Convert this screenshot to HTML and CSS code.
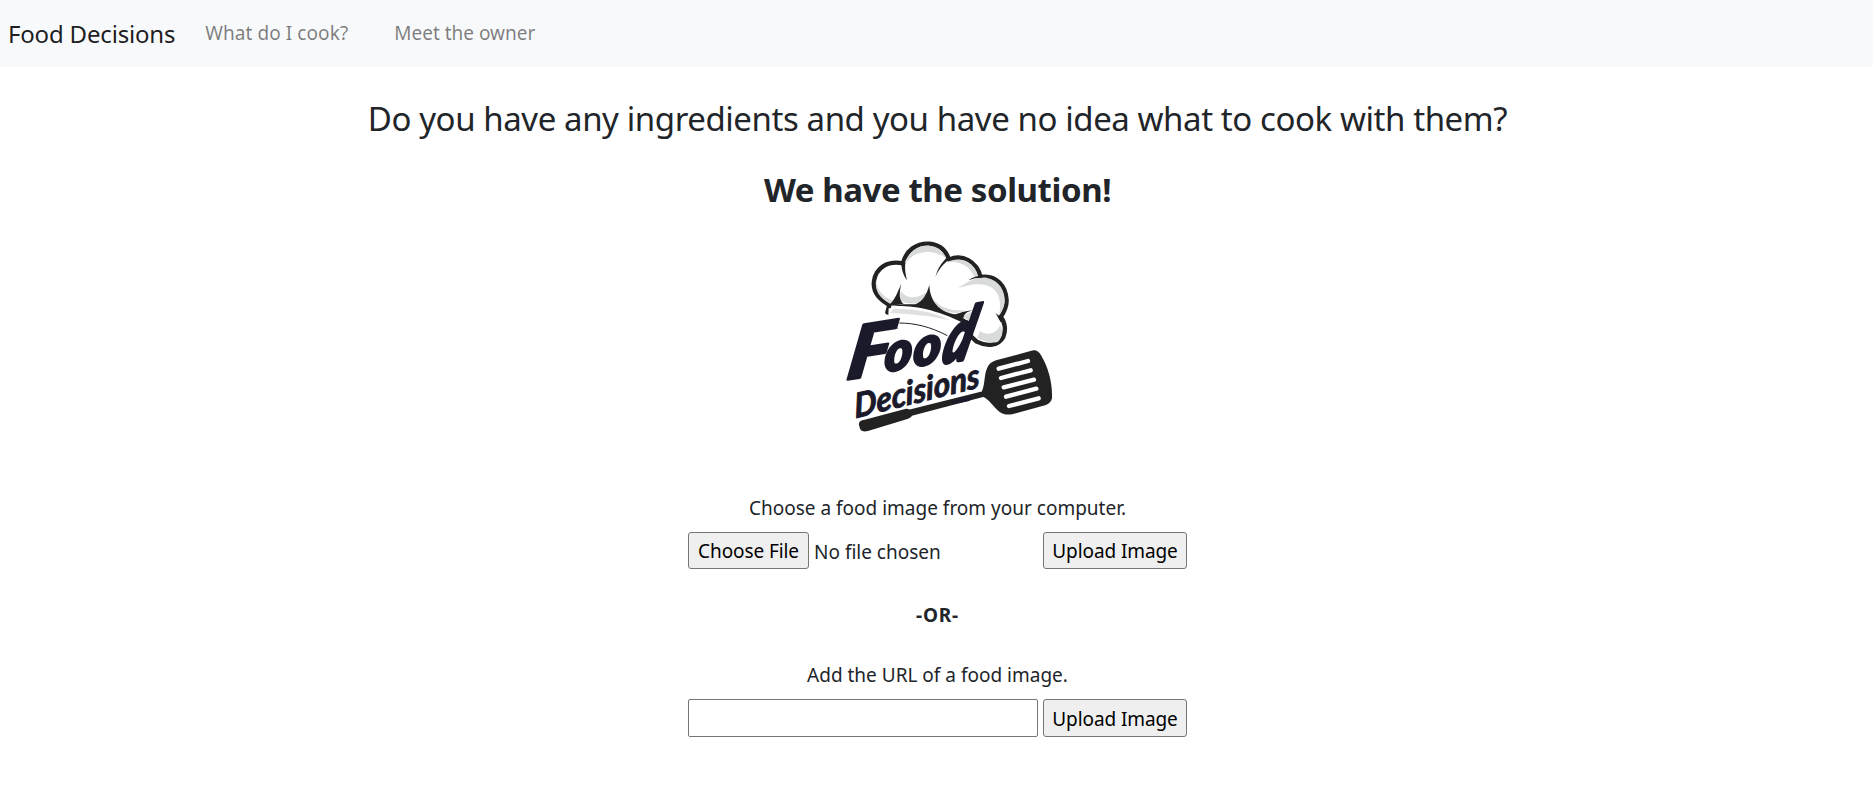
FILE: index.html
```
<!DOCTYPE html>
<html lang="en">
<head>
<meta charset="utf-8">
<title>Food Decisions</title>
<link rel="stylesheet" href="styles.css">
</head>
<body>
<nav class="navbar">
  <a class="brand">Food Decisions</a>
  <a class="nav-link cook">What do I cook?</a>
  <a class="nav-link owner">Meet the owner</a>
</nav>
<main class="content">
  <h1 class="question">Do you have any ingredients and you have no idea what to cook with them?</h1>
  <h2 class="answer">We have the solution!</h2>
  <svg class="logo" viewBox="0 0 840 660" role="img" aria-label="Food Decisions">
    <!-- chef hat -->
    <path d="M262 262 L268 240 C232 220 218 196 222 168 C228 128 262 106 309 115 C318 76 350 54 388 56 C418 59 438 76 447 104 C486 86 530 108 542 156 C588 148 618 184 620 226 C620 244 612 262 602 276 C616 292 618 316 610 336 C596 362 562 366 530 350 L500 322 Z" fill="#fff" stroke="#222" stroke-width="13" stroke-linejoin="round"/>
    <g fill="#d9dbdb">
      <path d="M311 122 C324 80 356 58 388 62 C412 65 430 78 438 100 C400 70 345 76 318 112 Z"/>
      <path d="M440 112 C478 92 522 108 534 152 L522 154 C508 122 480 106 440 112 Z"/>
      <path d="M474 190 C500 170 530 154 560 158 C600 166 616 200 614 232 C612 250 604 262 598 270 C612 192 566 158 474 190 Z"/>
      <path d="M228 166 C224 196 238 220 270 236 L292 230 C256 224 232 200 228 166 Z"/>
      <path d="M302 196 C316 224 352 222 378 202 L376 228 C350 240 314 236 300 228 Z"/>
      <path d="M388 196 C398 238 440 260 494 256 C470 272 424 262 390 234 Z"/>
      <path d="M490 276 C504 262 520 258 530 262 L520 296 Z"/>
      <path d="M540 318 C562 334 590 326 600 300 C610 316 608 338 594 350 C572 358 546 346 532 338 Z"/>
    </g>
    <g fill="#222">
      <path d="M304 112 C304 130 308 148 321 166 C316 146 314 132 316 112 Z"/>
      <path d="M406 156 C416 134 430 116 452 100 L440 98 C424 114 412 132 406 156 Z"/>
      <path d="M506 166 C520 154 534 152 548 152 L546 158 C530 158 518 160 506 166 Z"/>
      <path d="M304 176 C292 202 288 220 266 242 L312 238 C298 228 296 208 304 176 Z"/>
      <path d="M388 180 C380 208 370 228 346 238 L312 238 L268 244 C340 240 410 252 510 304 L514 294 L490 280 C492 264 506 256 530 256 C504 254 480 264 466 268 C430 264 390 240 388 180 Z"/>
      <path d="M586 264 C592 272 596 282 602 292 L608 280 Z"/>
    </g>
    <path d="M266 250 C340 244 420 262 508 308 L500 350 L440 330 C390 308 350 296 264 290 Z" fill="#fff"/>
    <path d="M280 252 C350 250 410 264 450 286 C390 272 340 268 270 264 Z" fill="#dfe0e0"/>
    <path d="M298 294 C340 294 390 304 442 332 M286 304 L293 310" fill="none" stroke="#222" stroke-width="3"/>
    <!-- spatula -->
    <g fill="#222">
      <path d="M178 604 C174 592 180 586 194 584 L318 551 C326 550 334 556 338 567 C336 576 330 580 322 582 L204 618 C188 622 180 618 178 604 Z"/>
      <path d="M320 556 L548 499 L552 515 L330 574 Z"/>
      <path d="M546 498 C556 476 552 446 562 428 C568 414 578 408 594 404 L700 376 C712 376 718 382 724 392 C744 426 758 472 756 520 C754 530 748 536 738 540 L636 568 C622 570 608 568 598 560 C580 546 568 522 548 515 Z"/>
    </g>
    <path d="M596 431 L684 408 M603 459 L692 436 M611 487 L702 464 M618 515 L709 491 M627 543 L716 520" stroke="#fff" stroke-width="13" stroke-linecap="round"/>
    <path d="M452 528 L516 512 L508 528 L460 538 Z" fill="#1b1a2b"/>
    <!-- lettering -->
    <g class="lettering">
      <text class="big" transform="translate(136 464) rotate(-9) skewX(-18) scale(1.2 1.04)" font-size="205">F</text>
      <text class="big" transform="translate(252 442) rotate(-10) skewX(-14)" font-size="158">o</text>
      <text class="big" transform="translate(338 426) rotate(-10) skewX(-14)" font-size="158">o</text>
      <text class="big" transform="translate(420 416) rotate(-10) skewX(-25) scale(1 1.36)" font-size="155">d</text>
      <text class="small" transform="translate(166 580) rotate(-14) skewX(-10)" font-size="100" textLength="386" lengthAdjust="spacingAndGlyphs">Decisions</text>
    </g>
  </svg>
  <p class="line file-label">Choose a food image from your computer.</p>
  <form class="row">
    <button type="button" class="btn choose">Choose File</button>
    <span class="status">No file chosen</span>
    <button type="button" class="btn upload">Upload Image</button>
  </form>
  <p class="line or">-OR-</p>
  <p class="line url-label">Add the URL of a food image.</p>
  <form class="row url-row">
    <input class="url" type="text" aria-label="Image URL">
    <button type="button" class="btn upload">Upload Image</button>
  </form>
</main>
</body>
</html>
```
FILE: styles.css
```
* { box-sizing: border-box; }
body {
  margin: 0;
  background: #fff;
  color: #212529;
  font-family: "Noto Sans", "Open Sans", sans-serif;
  font-size: 19px;
  line-height: 30px;
}
.navbar {
  display: flex;
  align-items: flex-start;
  height: 67px;
  padding: 18px 8px 0;
  background: #f8f9fb;
}
.brand { padding-top: 1px; font-size: 24px; letter-spacing: -0.18px; color: rgba(0, 0, 0, .9); }
.nav-link { color: rgba(0, 0, 0, .5); }
.cook { margin-left: 30px; letter-spacing: 0.07px; }
.owner { margin-left: 46px; }
.content {
  display: flex;
  flex-direction: column;
  align-items: center;
  padding: 31px 0 0 2px;
}
.question, .answer {
  margin: 0;
  font-size: 33px;
  letter-spacing: -0.42px;
  line-height: 42px;
  white-space: nowrap;
}
.question { font-weight: 400; }
.answer { margin-top: 29px; font-weight: 700; }
.logo { display: block; width: 280px; height: 220px; margin-top: 14px; margin-left: 5px; }
.lettering { fill: #1b1a2b; stroke: #1b1a2b; stroke-linejoin: round; font-family: Lato, sans-serif; font-style: italic; }
.big { font-weight: 900; stroke-width: 8px; }
.small { font-weight: 700; stroke-width: 3px; }
.line { margin: 0; }
.file-label { margin-top: 48px; }
.row { display: flex; width: 499px; height: 37px; margin: 9px 0 0; }
.btn {
  height: 37px;
  padding: 0;
  border: 1px solid #767676;
  border-radius: 3px;
  background: #efefef;
  color: #000;
  font: inherit;
  letter-spacing: -0.1px;
  text-align: center;
}
.choose { width: 121px; }
.status { flex: 1; padding: 5px 0 0 5px; }
.upload { width: 144px; }
.or { margin-top: 31px; font-weight: 700; letter-spacing: 0.8px; }
.url-label { margin-top: 30px; }
.url-row { height: 38px; gap: 5px; }
.url-row .btn { height: 38px; padding-top: 1px; }
.url { flex: 1; min-width: 0; border: 1px solid #767676; border-radius: 2px; background: #fff; }
```
